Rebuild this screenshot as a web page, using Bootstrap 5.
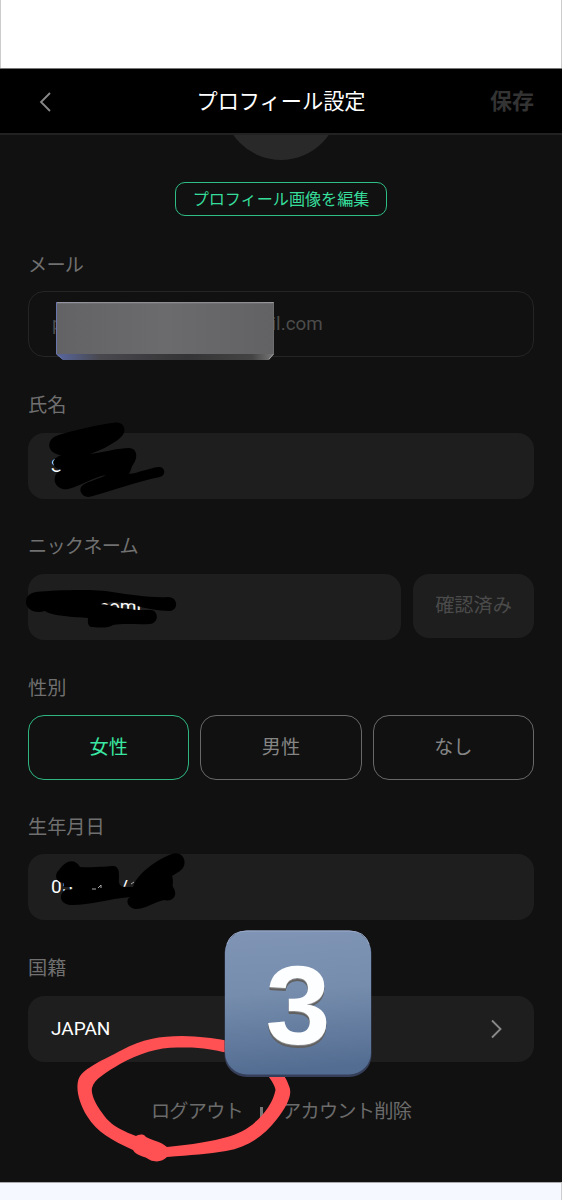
<!DOCTYPE html>
<html lang="ja" data-bs-theme="dark">
<head>
<meta charset="utf-8">
<meta name="viewport" content="width=device-width, initial-scale=1">
<title>プロフィール設定</title>
<link href="https://cdn.jsdelivr.net/npm/bootstrap@5.3.0/dist/css/bootstrap.min.css" rel="stylesheet">
<style>
  body { font-family: Roboto, "Noto Sans CJK JP", sans-serif; font-size: 19.2px; line-height: 28px; background: #fff; color: #fff; }
  .screen { height: 1200px; overflow: hidden; }
  .top-space { height: 68px; border-left: 1px solid #ccc; border-right: 1px solid #ccc; background: #fff; }
  .title-bar { height: 67px; background: #000; border-top: 1px solid #777; border-bottom: 2px solid #222; padding: 1px 28px 0 38px; }
  .title-bar h1 { font-size: 21.2px; line-height: 30px; font-weight: 400; left: 0; right: 0; top: 18px; }
  .save { font-size: 22px; font-weight: 700; color: #333; padding-top: 1px; }
  .content-area { height: 1047px; background: #111; padding: 0 28px; }
  .avatar-crop { height: 25px; }
  .avatar-disc { width: 116px; height: 116px; background: #292929; margin-top: -91px; }
  .btn-edit { width: 212px; height: 34px; margin-top: 22px; border: 1.3px solid #2fbd86; border-radius: 10px; color: #36dd9b; font-size: 16.1px; line-height: 32px; }
  .btn-edit span { position: relative; top: 1px; }
  .profile-form { padding-top: 35px; }
  .form-part { margin-bottom: 33.5px; }
  .form-part > label { display: block; height: 28px; margin-bottom: 12px; color: #707070; padding-top: 1px; }
  .form-part + .form-part > label { margin-bottom: 14px; }
  .form-part.gender-part > label, .form-part.birth-part > label { margin-bottom: 13px; }
  .kana { letter-spacing: -.75px; }
  .input-box { height: 66px; border-radius: 16px; background: #1e1e1e; padding: 0 24px 0 23px; font-size: 19px; }
  .input-box.outlined { background: #111; border: 1px solid #252525; color: #4c4c4c; font-size: 18.8px; }
  .nickname-box { width: 373px; }
  .checked-btn { width: 121px; height: 64px; color: #4b4b4b; border-radius: 16px; background: #1e1e1e; }
  .choice { height: 65px; border: 1.3px solid #686868; border-radius: 16px; color: #858585; font-size: 19.2px; line-height: 28px; padding-top: 7px; }
  .choice.picked { border-color: #2eb681; color: #3ae7a3; }
  .account-links { color: #6b6b6b; margin-top: 36px; }
  .rule { width: 3px; height: 12px; background: #777; margin: 2px 19px 0 17px; }
  .bottom-space { height: 18px; background: #f5f8ff; border-top: 1px solid #aaa; border-right: 1px solid #ccc; }
  .overlay { inset: 0; pointer-events: none; }
  .tile-digit { font: 700 112px "Liberation Sans", sans-serif; filter: drop-shadow(0 1px 0 #8b8b8b) drop-shadow(0 2px 0 #606060); }
</style>
</head>
<body>
<main class="screen position-relative">
  <div class="top-space"></div>
  <header class="title-bar d-flex align-items-center justify-content-between position-relative">
    <svg width="14" height="22" viewBox="0 0 14 22" fill="none" stroke="#888" stroke-width="1.8"><path d="M12 2 3 11l9 9"/></svg>
    <h1 class="position-absolute text-center m-0">プロフィール設定</h1>
    <span class="save">保存</span>
  </header>
  <section class="content-area">
    <div class="avatar-crop overflow-hidden"><div class="avatar-disc rounded-circle mx-auto"></div></div>
    <button class="btn btn-edit d-block mx-auto p-0"><span>プロフィール画像を編集</span></button>
    <form class="profile-form">
      <div class="form-part"><label class="kana">メール</label>
        <div class="input-box outlined d-flex align-items-center"><span>p</span><span style="margin-left:209px">il.com</span></div></div>
      <div class="form-part"><label>氏名</label>
        <div class="input-box d-flex align-items-center"><span>S</span></div></div>
      <div class="form-part"><label class="kana">ニックネーム</label>
        <div class="d-flex justify-content-between"><div class="input-box nickname-box d-flex align-items-center"><span class="ps-5">comi</span></div>
          <div class="checked-btn d-flex align-items-center justify-content-center">確認済み</div></div></div>
      <div class="form-part gender-part"><label>性別</label>
        <div class="d-flex" style="gap:11px">
          <button type="button" class="btn choice picked flex-fill w-100">女性</button>
          <button type="button" class="btn choice flex-fill w-100">男性</button>
          <button type="button" class="btn choice flex-fill w-100">なし</button>
        </div></div>
      <div class="form-part birth-part"><label>生年月日</label>
        <div class="input-box d-flex align-items-center"><span>05</span><span style="margin-left:48px">/</span></div></div>
      <div class="form-part mb-0"><label>国籍</label>
        <div class="input-box d-flex align-items-center justify-content-between"><span>JAPAN</span>
          <svg width="26" height="22" viewBox="0 0 26 22" fill="none" stroke="#888" stroke-width="1.9"><path d="m8 2.500 8.500 8.500L8 19.500"/></svg></div></div>
      <div class="account-links kana d-flex justify-content-center align-items-center"><span>ログアウト</span><span class="rule"></span><span>アカウント削除</span></div>
    </form>
  </section>
  <div class="bottom-space"></div>

  <svg class="overlay position-absolute" width="562" height="1200" viewBox="0 0 562 1200">
    <defs>
      <linearGradient id="plate" x2="1"><stop stop-color="#636365"/><stop offset=".5" stop-color="#6b6b6d"/><stop offset="1" stop-color="#626264"/></linearGradient>
      <linearGradient id="plateEdge" x2="1"><stop stop-color="#5967a0"/><stop offset=".2" stop-color="#48484e"/><stop offset=".6" stop-color="#343436"/><stop offset=".9" stop-color="#444"/><stop offset="1" stop-color="#777"/></linearGradient>
      <linearGradient id="tile" x2=".08" y2="1"><stop stop-color="#8095b5"/><stop offset=".45" stop-color="#768dad"/><stop offset="1" stop-color="#536d92"/></linearGradient>
    </defs>
    <!-- redaction plate -->
    <path d="M56 302H274V354L269 360H63L56 354Z" fill="url(#plateEdge)"/>
    <path d="M57 303H273.500V354H57Z" fill="url(#plate)"/>
    <path d="M57 302.700H273.500M269 359l4.500-5" stroke="#a0a0a5" fill="none"/>
    <path d="M56.500 303v51l6 5" stroke="#6876ad" fill="none"/>
    <!-- black marker strokes -->
    <path d="M56 436C70 431 101 424 117 422.500C125 423 127 432 121 437C113 445 98 451 90 454C105 452 119 448 129 448C137 448 138 457 134 463C131 467 131 471 129 474C138 473 150 468 158 467C165 466 167 475 160 477C139 481 111 491 91 496.500C82 499 77 489 83 485C89 481 99 479 106 475C94 477 78 487 68 489C57 491 51 480 57 473C59 471 61 471 61 470C53 468 52 462 54 460C58 455 67 453 70 453L61 455C48 454 45 441 56 436Z"/>
    <path d="M55 458h8v10h-6Z"/>
    <path d="M36 592C58 590 95 589 112 592C133 595 151 598 168 597C178 597 179 610 170 611C158 611 145 608 137 606V610H151C159 611 159 623 150 624C138 625 124 623 113 625C108 629 94 627 91 627C87 625 88 621 88 618C74 617 52 616 45 611C34 614 26 609 26 602C26 596 30 593 36 592ZM100 604L109 605L119 608L130 609L136 610V604C124 602 111 601 100 604Z" fill-rule="evenodd"/>
    <path d="M59 870C66 860 75 858 80 867C92 868 109 866 114 866C119 867 119 872 119 878C118 884 120 887 126 887H133C137 873 158 859 172 854C184 850 189 865 180 871L172 876C174 882 172 885 173 887C179 896 172 902 164 900C154 902 146 909 135 909C126 907 126 899 130 897C108 899 91 905 72 905C60 905 58 895 65 890L73 889V887H64V883C54 882 55 873 59 870Z"/>
    <path d="M92 889h4M98 888l3-3v3M131 884l3-2" stroke="#aaa" fill="none"/>
    <!-- red annotation -->
    <path d="M226 1040.500C212 1038 200 1036.500 182 1036C160 1036 142 1039 122 1050C103 1060 84 1068 79 1078C75 1088 79 1103 87 1116C97 1132 111 1140 133 1150C136 1156 145 1156 150 1160C157 1163 163 1161 167 1157C191 1155 208 1154 226 1151C248 1147 264 1136 277 1119C287 1106 293 1094 289 1086C287 1080 285 1077 282 1073H266C272 1081 275 1086 275.500 1090C273 1103 263 1117 249 1127C232 1139 204 1143 167 1147C160 1141 151 1140 146 1137C143 1133 138 1135 136 1136C112 1127 107 1120 100 1110C94 1101 91 1093 92 1088C94 1079 107 1072 120 1064C140 1053 159 1047 180 1047.500C203 1047 214 1050 226 1052.500Z" fill="#ff5053"/>
    <!-- number tile -->
    <rect x="224.500" y="932" width="147" height="145" rx="22" fill="#363f59"/>
    <rect x="225" y="930.500" width="146" height="144" rx="22" fill="url(#tile)"/>
    <path d="M227 944Q231 931 247 931H349Q365 931 369 944" fill="none" stroke="#9aaaca" stroke-width="1"/>
    <text class="tile-digit" x="265.500" y="1043.500" fill="#fcfeff" textLength="65" lengthAdjust="spacingAndGlyphs">3</text>
  </svg>
</main>
<script src="https://cdn.jsdelivr.net/npm/bootstrap@5.3.0/dist/js/bootstrap.bundle.min.js"></script>
</body>
</html>
